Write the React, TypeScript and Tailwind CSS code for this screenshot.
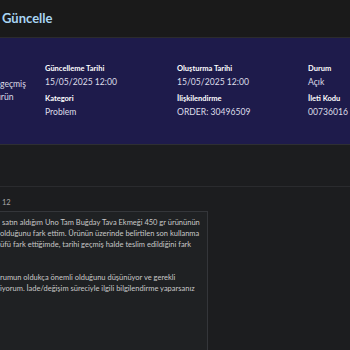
import React from 'react';

const fields = [
  { label: 'Güncelleme Tarihi', value: '15/05/2025 12:00' },
  { label: 'Oluşturma Tarihi', value: '15/05/2025 12:00' },
  { label: 'Durum', value: 'Açık' },
  { label: 'Kategori', value: 'Problem' },
  { label: 'İlişkilendirme', value: 'ORDER: 30496509' },
  { label: 'İleti Kodu', value: '00736016' },
];

const Field: React.FC<{ label: string; value: string }> = ({ label, value }) => (
  <div className="flex flex-col">
    <span className="text-[7.5px] font-bold leading-[10px] text-white">{label}</span>
    <span className="mt-[1px] whitespace-nowrap text-[8.6px] leading-[14px] text-[#dddde8]">{value}</span>
  </div>
);

const App: React.FC = () => {
  return (
    <div className="h-[350px] w-[350px] overflow-hidden bg-[#1c1d1f] font-['Lato',sans-serif]">
      <header className="flex h-[38px] items-center border-b border-[#2b2b2d] bg-[#1a1a1a] pl-[2px]">
        <h1 className="text-[13px] font-bold leading-none text-[#a9d5f3]">Güncelle</h1>
      </header>

      <section className="flex h-[107px] items-center border-b border-[#2e2f33] bg-[#1e1b4b]">
        <div className="w-[45px] shrink-0 whitespace-nowrap text-[8.6px] leading-[13px] text-[#dcdce6]">
          <div>geçmiş</div>
          <div className="-ml-[4px]">ürün</div>
        </div>
        <div className="grid flex-1 grid-cols-[132px_131px_1fr] gap-y-[5px]">
          {fields.map(f => (
            <Field key={f.label} label={f.label} value={f.value} />
          ))}
        </div>
      </section>

      <div className="h-[42px] border-b border-[#2a2b2e]" />

      <div className="pt-[11px]">
        <div className="pl-[2px] text-[7.5px] leading-[10px] text-[#a8a8a8]">12</div>
        <div className="-ml-[20px] mt-[3px] h-[200px] w-[228px] border-t border-r border-[#34363a] bg-[#1f2123] pt-[4.5px] pl-[20px] text-[7.5px] leading-[11px] text-[#c8c8c8]">
          <p className="whitespace-nowrap">
            <span className="block pl-[2px]">satın aldığım Uno Tam Buğday Tava Ekmeği 450 gr ürününün</span>
            <span className="block">olduğunu fark ettim. Ürünün üzerinde belirtilen son kullanma</span>
            <span className="block">üfü fark ettiğimde, tarihi geçmiş halde teslim edildiğini fark</span>
          </p>
          <p className="mt-[22px] whitespace-nowrap">
            <span className="block">rumun oldukça önemli olduğunu düşünüyor ve gerekli</span>
            <span className="block">iyorum. İade/değişim süreciyle ilgili bilgilendirme yaparsanız</span>
          </p>
        </div>
      </div>
    </div>
  );
};

export default App;
